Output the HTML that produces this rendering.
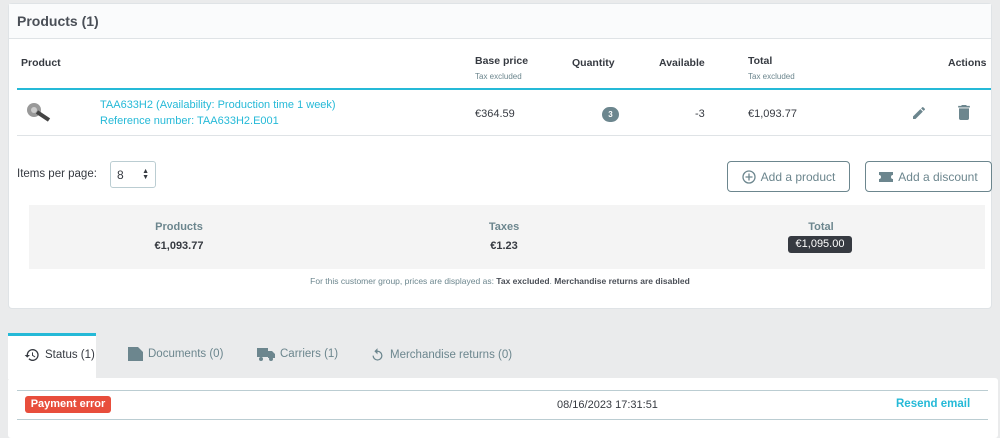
<!DOCTYPE html>
<html><head><meta charset="utf-8"><style>
*{box-sizing:border-box;margin:0;padding:0}
body{width:1000px;height:433px;overflow:hidden;background:#eaebec;font-family:"Liberation Sans",sans-serif;color:#363a41;position:relative;font-size:11px}
.a{position:absolute}
.card{left:8px;top:3px;width:984px;height:306px;background:#fff;border-radius:4px;border:1px solid #dfe3e6}
.hd{left:0;top:0;width:982px;height:35px;background:#fafbfc;border-bottom:1px solid #dfe3e6;font-size:14px;font-weight:bold;color:#4a4f57;padding:9px 8px}
.th{font-weight:bold;font-size:10.5px;color:#363a41}
.sub{font-size:8px;color:#6c868e;font-weight:normal}
.btn{border:1px solid #6c868e;border-radius:4px;height:31px;color:#6c868e;font-size:12px;display:flex;align-items:center;justify-content:center;background:#fff}
.sum{left:20px;top:201px;width:956px;height:64px;background:#f4f4f4}
.lbl{font-weight:bold;color:#6c868e;font-size:11px;text-align:center}
.val{font-weight:bold;font-size:11px;text-align:center}
.tab{color:#6c868e;font-size:11.5px;display:flex;align-items:center;gap:5px}
</style></head><body>
<div class="a card">
 <div class="a hd">Products (1)</div>
 <div class="a th" style="left:12px;top:53px">Product</div>
 <div class="a th" style="left:466px;top:51px">Base price<div class="sub" style="margin-top:5px">Tax excluded</div></div>
 <div class="a th" style="left:563px;top:53px">Quantity</div>
 <div class="a th" style="left:650px;top:53px">Available</div>
 <div class="a th" style="left:739px;top:51px">Total<div class="sub" style="margin-top:5px">Tax excluded</div></div>
 <div class="a th" style="left:939px;top:53px">Actions</div>
 <div class="a" style="left:8px;top:84px;width:974px;height:2px;background:#25b9d7"></div>
 <svg class="a" style="left:16px;top:97px" width="26" height="22"><circle cx="9" cy="9" r="7" fill="#999"/><circle cx="9" cy="9" r="3" fill="#ccc"/><path d="M12 11 L24 19" stroke="#444" stroke-width="4"/></svg>
 <div class="a" style="left:91px;top:93px;color:#25b9d7;font-size:11px;line-height:16px">TAA633H2 (Availability: Production time 1 week)<br>Reference number: TAA633H2.E001</div>
 <div class="a" style="left:466px;top:104px;font-size:11px">€364.59</div>
 <div class="a" style="left:593px;top:103px;width:17px;height:15px;border-radius:8px;background:#6c868e;color:#fff;font-size:8px;font-weight:bold;text-align:center;line-height:15px">3</div>
 <div class="a" style="left:686px;top:104px;font-size:11px">-3</div>
 <div class="a" style="left:739px;top:104px;font-size:11px">€1,093.77</div>
 <svg class="a" style="left:902px;top:101px" width="16" height="16" viewBox="0 0 24 24"><path fill="#6c868e" d="M3 17.25V21h3.75L17.81 9.94l-3.75-3.75L3 17.25zM20.71 7.04a1 1 0 0 0 0-1.41l-2.34-2.34a1 1 0 0 0-1.41 0l-1.83 1.83 3.75 3.75 1.83-1.83z"/></svg>
 <svg class="a" style="left:949px;top:101px" width="12" height="15" viewBox="5 3 14 18"><path fill="#6c868e" d="M6 19c0 1.1.9 2 2 2h8c1.1 0 2-.9 2-2V7H6v12zM19 4h-3.5l-1-1h-5l-1 1H5v2h14V4z"/></svg>
 <div class="a" style="left:8px;top:131px;width:974px;height:1px;background:#dfe3e6"></div>
 <div class="a" style="left:8px;top:164px;font-size:11.5px">Items per page:</div>
 <div class="a" style="left:101px;top:157px;width:46px;height:27px;border:1px solid #bbcdd2;border-radius:3px;padding:6px 6px;font-size:12px">8<span style="position:absolute;right:6px;top:7px;font-size:7px;line-height:6px">▲<br>▼</span></div>
 <div class="a btn" style="left:718px;top:157px;width:123px"><svg width="14" height="14" style="margin-right:5px"><circle cx="7" cy="7" r="6" fill="none" stroke="#6c868e" stroke-width="1.3"/><path d="M7 3.5v7M3.5 7h7" stroke="#6c868e" stroke-width="1.3"/></svg>Add a product</div>
 <div class="a btn" style="left:856px;top:157px;width:127px"><svg width="14" height="12" style="margin-right:5px"><path d="M0 1h14v3a2 2 0 0 0 0 4v3H0V8a2 2 0 0 0 0-4z" fill="#6c868e"/></svg>Add a discount</div>
 <div class="a sum">
  <div class="a lbl" style="left:110px;top:16px;width:80px">Products</div>
  <div class="a val" style="left:110px;top:35px;width:80px">€1,093.77</div>
  <div class="a lbl" style="left:435px;top:16px;width:80px">Taxes</div>
  <div class="a val" style="left:435px;top:35px;width:80px">€1.23</div>
  <div class="a lbl" style="left:752px;top:16px;width:80px">Total</div>
  <div class="a" style="left:759px;top:31px;width:64px;height:17px;background:#363a41;color:#fff;border-radius:3px;font-size:11px;text-align:center;line-height:17px">€1,095.00</div>
 </div>
 <div class="a" style="left:0;top:272px;width:982px;text-align:center;font-size:8.5px;color:#6c868e">For this customer group, prices are displayed as: <b style="color:#4a4f57">Tax excluded</b>. <b style="color:#4a4f57">Merchandise returns are disabled</b></div>
</div>
<div class="a" style="left:8px;top:333px;width:88px;height:46px;background:#fff;border-top:3px solid #25b9d7"></div>
<div class="a tab" style="left:24px;top:347px;color:#363a41"><svg width="16" height="16" viewBox="0 0 24 24"><path fill="#363a41" d="M13 3a9 9 0 0 0-9 9H1l3.9 3.9L9 12H6a7 7 0 1 1 2.05 4.95l-1.42 1.42A9 9 0 1 0 13 3zm-1 5v5l4.25 2.52.77-1.28-3.52-2.09V8z"/></svg>Status (1)</div>
<div class="a tab" style="left:128px;top:347px"><svg width="15" height="14"><path d="M0 0h10l5 5v9H0z" fill="#6c868e"/></svg>Documents (0)</div>
<div class="a tab" style="left:257px;top:347px"><svg width="18" height="14"><path d="M0 1h11v9H0zM11 4h4l3 3v4H11z" fill="#6c868e"/><circle cx="4" cy="12" r="2" fill="#6c868e"/><circle cx="14" cy="12" r="2" fill="#6c868e"/></svg>Carriers (1)</div>
<div class="a tab" style="left:370px;top:347px"><svg width="15" height="16" viewBox="0 0 24 24"><path fill="#6c868e" d="M12 5V1L7 6l5 5V7a6 6 0 1 1-6 6H4a8 8 0 1 0 8-8z"/></svg>Merchandise returns (0)</div>
<div class="a" style="left:8px;top:378px;width:990px;height:60px;background:#fff;border-radius:3px"></div>
<div class="a" style="left:17px;top:390px;width:971px;height:1px;background:#bbcdd2"></div>
<div class="a" style="left:25px;top:396px;width:86px;height:17px;background:#e84e3c;border-radius:3px;color:#fff;font-weight:bold;font-size:11px;text-align:center;line-height:17px">Payment error</div>
<div class="a" style="left:557px;top:399px;font-size:11px">08/16/2023 17:31:51</div>
<div class="a" style="left:896px;top:398px;font-size:11.5px;color:#25b9d7;font-weight:bold">Resend email</div>
<div class="a" style="left:17px;top:419px;width:971px;height:1px;background:#bbcdd2"></div>
</body></html>
